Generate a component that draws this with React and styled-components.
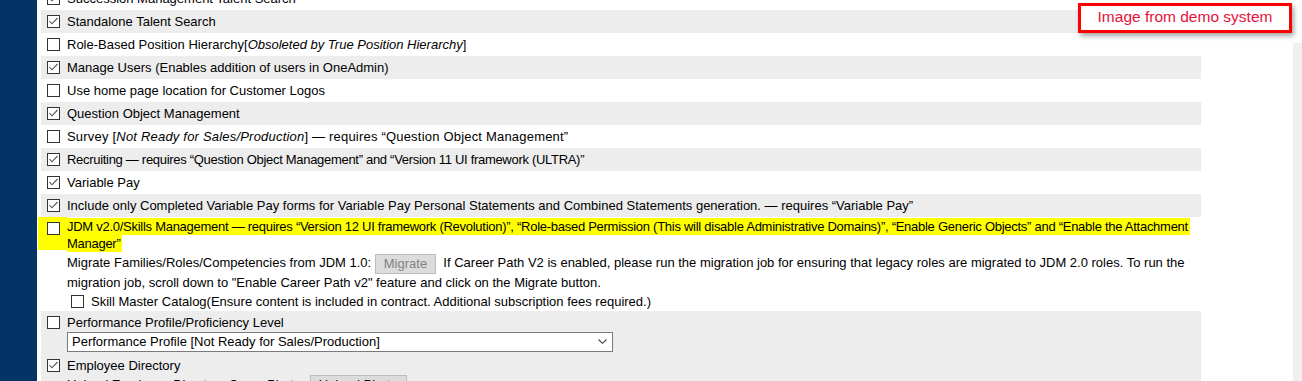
import React from "react";
import styled, { createGlobalStyle } from "styled-components";

const Global = createGlobalStyle`
  html, body { margin: 0; padding: 0; overflow: hidden; background: #fff; }
  body { font-family: "Liberation Sans", Arial, sans-serif; font-size: 13px; color: #000; }
`;

const Page = styled.div`
  display: flex;
  height: 100vh;
  overflow: hidden;
  position: relative;
`;

const Sidebar = styled.div`
  width: 37px;
  flex: none;
  background: #033466;
`;

const Content = styled.div`
  flex: 1;
  padding-left: 4px;
  overflow: hidden;
`;

const List = styled.div`
  width: 1160px;
  margin-top: -13px;
`;

const ScrollTrack = styled.div`
  width: 9px;
  flex: none;
  margin-top: 43px;
  background: #f0f0f0;
`;

const Row = styled.div`
  display: flex;
  align-items: center;
  gap: 7px;
  min-height: 23px;
  padding-left: 6px;
  background: ${(p) => (p.$shaded ? "#ededed" : "transparent")};
`;

const Box = styled.span`
  width: 13px;
  height: 13px;
  flex: none;
  box-sizing: border-box;
  border: 1px solid #333;
  background: #fff;
  display: inline-flex;
  align-items: center;
  justify-content: center;
`;

const Check = ({ checked }) => (
  <Box>
    {checked && (
      <svg width="11" height="11" viewBox="0 0 11 11">
        <polyline points="1.5,5 4,7.8 9.5,2" fill="none" stroke="#555" strokeWidth="1.1" />
      </svg>
    )}
  </Box>
);

const Label = styled.span`
  white-space: nowrap;
  letter-spacing: ${(p) => p.$tracking || 0}px;
`;

const NoteRow = styled.div`
  display: flex;
  align-items: flex-start;
`;

const MarkCell = styled.div`
  margin-left: -3px;
  width: 29px;
  height: 33px;
  box-sizing: border-box;
  padding: 5px 0 0 9px;
  background: #ffff00;
  flex: none;
`;

const NoteBody = styled.div`
  flex: 1;
  padding-top: 1px;
  line-height: 17px;
  padding-right: 2px;
`;

const Marker = styled.span`
  background: #ffff00;
  padding: 1px 2px 1px 0;
  white-space: nowrap;
  letter-spacing: -0.27px;
  -webkit-box-decoration-break: clone;
  box-decoration-break: clone;
`;

const Para = styled.div`
  margin-top: 1px;
  line-height: 19px;
`;

const GreyButton = styled.span`
  display: inline-block;
  box-sizing: border-box;
  height: 20px;
  line-height: 18px;
  margin: -1px 0;
  padding: 0 ${(p) => p.$pad || 10}px;
  vertical-align: middle;
  background: #dcdcdc;
  border: 1px solid #bdbdbd;
  color: ${(p) => (p.$disabled ? "#838383" : "#000")};
`;

const SubRow = styled.div`
  display: flex;
  align-items: center;
  gap: 7px;
  height: 19px;
  margin-left: 4px;
`;

const Block = styled.div`
  background: #ededed;
  padding: ${(p) => p.$pad || "0"};
  padding-left: 6px;
  display: flex;
  flex-direction: column;
`;

const Head = styled.div`
  display: flex;
  align-items: center;
  gap: 7px;
  height: 18px;
`;

const Select = styled.div`
  margin-left: 20px;
  width: 546px;
  height: 20px;
  box-sizing: border-box;
  border: 1px solid #7a7a7a;
  background: #fff;
  display: flex;
  align-items: center;
  justify-content: space-between;
  padding: 0 5px 0 4px;
`;

const Indented = styled.div`
  margin-left: 20px;
  display: flex;
  align-items: center;
  gap: 5px;
  height: 20px;
`;

const Badge = styled.div`
  position: absolute;
  left: 1078px;
  top: 3px;
  width: 214px;
  height: 30px;
  box-sizing: border-box;
  border: 3px solid #ff0000;
  background: #fff;
  box-shadow: 2px 3px 5px rgba(0, 0, 0, 0.35);
  color: #e8113a;
  font-size: 15.5px;
  display: flex;
  align-items: center;
  justify-content: center;
  padding-bottom: 2px;
`;

const rows = [
  { c: true, t: "Succession Management Talent Search" },
  { c: true, t: "Standalone Talent Search" },
  {
    c: false,
    t: (
      <>
        Role-Based Position Hierarchy[<i>Obsoleted by True Position Hierarchy</i>]
      </>
    ),
  },
  { c: true, t: "Manage Users (Enables addition of users in OneAdmin)" },
  { c: false, t: "Use home page location for Customer Logos" },
  { c: true, t: "Question Object Management" },
  {
    c: false,
    k: 0.2,
    t: (
      <>
        Survey [<i>Not Ready for Sales/Production</i>] — requires “Question Object Management”
      </>
    ),
  },
  { c: true, k: -0.3, t: "Recruiting — requires “Question Object Management” and “Version 11 UI framework (ULTRA)”" },
  { c: true, t: "Variable Pay" },
  {
    c: true,
    t: "Include only Completed Variable Pay forms for Variable Pay Personal Statements and Combined Statements generation. — requires “Variable Pay”",
  },
];

export default function App() {
  return (
    <>
      <Global />
      <Page>
        <Sidebar />
        <Content>
          <List>
            {rows.map((r, i) => (
              <Row key={i} $shaded={i % 2 === 1}>
                <Check checked={r.c} />
                <Label $tracking={r.k}>{r.t}</Label>
              </Row>
            ))}
            <NoteRow>
              <MarkCell>
                <Check checked={false} />
              </MarkCell>
              <NoteBody>
                <Marker>
                  JDM v2.0/Skills Management — requires “Version 12 UI framework (Revolution)”, “Role-based Permission (This will disable Administrative Domains)”, “Enable Generic Objects” and “Enable the Attachment
                </Marker>
                <br />
                <Marker>Manager”</Marker>
                <Para>
                  Migrate Families/Roles/Competencies from JDM 1.0: <GreyButton $disabled $pad={8}>Migrate</GreyButton>{" "}
                  &nbsp;If Career Path V2 is enabled, please run the migration job for ensuring that legacy roles are migrated to JDM 2.0 roles. To run the migration job, scroll down to "Enable Career Path v2" feature and click on the Migrate button.
                </Para>
                <SubRow>
                  <Check checked={false} />
                  <Label>Skill Master Catalog(Ensure content is included in contract. Additional subscription fees required.)</Label>
                </SubRow>
              </NoteBody>
            </NoteRow>
            <Block $pad="3px 0 4px">
              <Head>
                <Check checked={false} />
                <Label>Performance Profile/Proficiency Level</Label>
              </Head>
              <Select>
                <span>Performance Profile [Not Ready for Sales/Production]</span>
                <svg width="9" height="5" viewBox="0 0 9 5">
                  <polyline points="0.5,0.5 4.5,4.3 8.5,0.5" fill="none" stroke="#444" strokeWidth="1.1" />
                </svg>
              </Select>
            </Block>
            <Block $pad="1px 0 6px">
              <Head>
                <Check checked={true} />
                <Label>Employee Directory</Label>
              </Head>
              <Indented>
                <Label>Upload Employee Directory Cover Photo:</Label>
                <GreyButton $pad={8}>Upload Photo</GreyButton>
              </Indented>
            </Block>
          </List>
        </Content>
        <ScrollTrack />
        <Badge>Image from demo system</Badge>
      </Page>
    </>
  );
}
